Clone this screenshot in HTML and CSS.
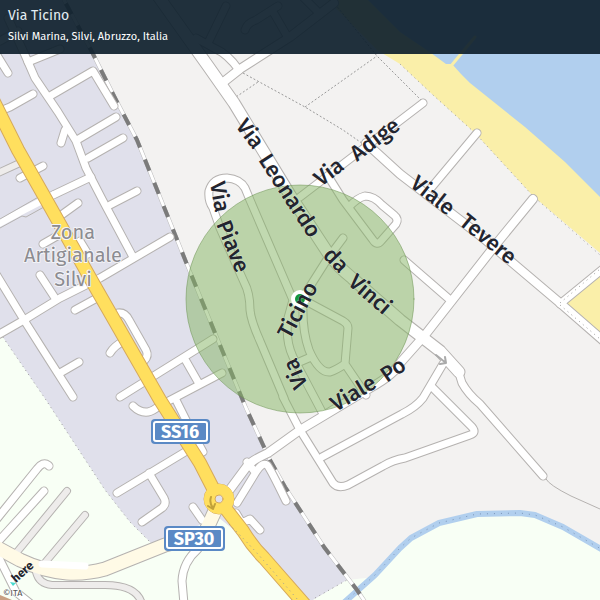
FILE: index.html
```
<!DOCTYPE html>
<html lang="it">
<head>
<meta charset="utf-8">
<meta name="viewport" content="width=device-width, initial-scale=1">
<title>Via Ticino</title>
<link rel="stylesheet" href="styles.css">
</head>
<body>
<main class="map-view">
<svg class="map" viewBox="0 0 600 600" preserveAspectRatio="xMidYMid slice">
  <defs>
    <g id="streets">
      <path d="M8 18L25 55L35 78L58 112L76 141L86 168L102 199L133 257"/>
      <path d="M28 62L60 49M0 41L18 31M50 96L93 71L114 106M77 140L116 117M88 158L123 138M65 130L61 143M0 111L10 107L33 94M-5 52L8 73"/>
      <path d="M20 178L43 166M53 195L91 177M110 205L137 191M60 216L78 203M43 244L64 232M80 241L88 254"/>
      <path d="M-4 336L24 320L60 298L100 278L170 237M40 275L55 298M75 310L97 298M-4 274L24 320L43 350L73 397M60 373L79 362"/>
      <path d="M118 313Q125 312 129 320L146 350Q149 356 144 361M110 353Q114 346 124 341"/>
      <path d="M120 397L213 339M186 361L198 382M133 406Q140 413 148 412Q153 411 159 406L222 373M176 400L190 428L203 452"/>
      <path d="M117 493L185 452M149 473L164 498Q167 504 162 508L142 522M193 507L202 520"/>
      <path d="M237 503L256 472Q262 462 267 465Q270 468 286 501M247 462L255 472M236 513L242 523L250 519L260 530"/>
      <path d="M283 397L300 430L333 483Q338 489 348 485L383 466Q393 460 405 458L470 435Q477 433 472 427L432 387"/>
      <path d="M322 457L402 414Q416 407 423 398L443 364"/>
      <path d="M322 412L293 357Q285 340 288 318L293 300L250 200L245 188Q240 179 227 178Q213 178 209 191Q208 201 213 208L220 228L244 282Q250 293 250 310Q251 321 260 341L284 398"/>
      <path d="M303 303Q302 330 309 350Q319 373 330 372Q336 370 345 364L348 328Q348 324 343 321L302 299L328 258L343 238M297 363L311 357M345 364L366 395"/>
      <path d="M328 176L343 200L373 240Q377 246 381 241L396 224Q399 219 394 215L382 205Q374 196 365 196Q357 198 349 207"/>
      <path d="M300 197L423 103M431 188L477 133M404 260L449 299M560 304L604 268"/>
      <path d="M196 38L214 48Q228 54 239 70M208 43L226 6M272 10L287 36M302 -4L320 14M245 30Q247 23 256 20L278 6"/>
      <path d="M458 370L462 383Q468 394 480 404L543 476"/>
      <path d="M-4 520L37 469Q43 461 48 465L49 466M-4 544L44 491M-4 552L16 592L36 608"/>
      <path d="M198 549Q183 562 182 581L184 604"/>
    </g>
    <g id="avenues">
      <path d="M228 492L248 465Q253 460 268 453L300 430L370 388Q395 374 401 362L425 335L497 243L533 199"/>
      <path d="M221 84L240 69L290 37L334 3"/>
      <path d="M366 143L400 174L482 237L560 303L606 343"/>
    </g>
    <path id="corso" d="M158 -4L208 66L234 103L290 195L328 253Q338 267 352 278L400 320L440 351L459 372"/>
    <g id="lanes">
      <path d="M17 552L67 491M43 565L85 515M36 572Q39 584 52 585L105 585Q137 585 142 604"/>
      <path d="M-4 174L22 162"/>
    </g>
    <path id="provincial" d="M-6 546L20 560Q43 571 67 573Q87 574 105 569L165 545L204 535L219 502"/>
    <path id="highway" d="M-8 98L18 150L48 203L93 283L160 400L200 463L219 500L243 531Q252 546 264 558L306 606"/>
    <path id="railway" d="M64 0L92 52L115 98L137 140L158 192L186 262L222 350L246 408L270 460L285 487L324 547L357 590L368 606"/>
    <path id="river" d="M338 608L375 575L400 548L411 538L439 523L477 514L520 513L535 515L563 527L608 553"/>
  </defs>

  <path class="land" d="M0 0H600V600H0z"/>
  <path class="industrial" d="M0 0H64L92 52L137 142L186 262L246 408L285 489L347 580L313 600H0z"/>
  <path class="meadow" d="M0 333L46 400L105 490L130 522L151 543L219 518L243 537L300 600H0z"/>
  <path class="meadow" d="M313 600L347 580L375 577L411 538L439 523L477 514L520 513L563 527L600 549V600z"/>
  <path class="sand" d="M328 0H420L600 180V253L533 196L475 133L433 95L400 64L377 50zM564 305L600 274V337z"/>
  <path class="water" d="M368 0L400 32L431 53L446 64H452L461 74L470 83L525 127L565 162L600 197V0z"/>
  <path class="pier" d="M451 66L475 37"/>

  <path class="border" d="M0 333L46 400L105 490L130 522L151 543M400 64L433 95L475 133L533 196L600 255M315 598L347 580"/>
  <path class="footway" d="M243 73L305 107L343 130L366 146M305 107L377 56M233 99L258 82M335 4L377 56L423 102"/>
  <path class="track" d="M546 479Q549 485 571 496L600 509"/>
  <use class="stream" href="#river"/>
  <use class="stream-dots" href="#river"/>

  <use class="rail-edge" href="#railway"/>
  <use class="rail-bed" href="#railway"/>
  <use class="rail-ties" href="#railway"/>

  <use class="edge lane-edge" href="#lanes"/>
  <use class="edge street-edge" href="#streets"/>
  <use class="edge avenue-edge" href="#avenues"/>
  <use class="edge corso-edge" href="#corso"/>
  <use class="edge provincial-edge" href="#provincial"/>
  <use class="lane-fill" href="#lanes"/>
  <use class="street-fill" href="#streets"/>
  <use class="avenue-fill" href="#avenues"/>
  <use class="corso-fill" href="#corso"/>
  <use class="provincial-fill" href="#provincial"/>
  <path class="street-fill" d="M42 564L85 566"/>
  <path class="street-fill" d="M0 223L24 210L53 195"/>
  <path class="street-outline" d="M0 228L22 216L26 217L44 207M0 219L42 195"/>
  <path class="corner" d="M0 595L12 600H0z"/>
  <path class="border" d="M560 305L600 339M560 303L600 269"/>

  <use class="highway-edge" href="#highway"/>
  <circle class="roundabout-edge" cx="219" cy="499" r="15"/>
  <use class="highway-fill" href="#highway"/>
  <circle class="roundabout" cx="219" cy="499" r="15"/>
  <circle class="island" cx="219" cy="499" r="4"/>
  <path class="turn" d="M211 497Q209 503 213 508M208 506L213 509L215 504"/>
  <path class="border" d="M229 524Q251 546 264 561L298 600"/>
  <path class="arrow" d="M436 355L446 363M445 357L446 363L440 364"/>

  <circle class="radius" cx="300" cy="299" r="114"/>
  <circle class="pin-ring" cx="300" cy="299" r="9"/>
  <circle class="pin" cx="300" cy="299" r="5"/>

  <g class="area-label">
    <text x="73" y="239">Zona</text>
    <text x="73" y="262">Artigianale</text>
    <text x="73" y="286">Silvi</text>
  </g>
  <g class="road-label">
    <text transform="translate(235 126) rotate(53)">Via</text>
    <text transform="translate(258 160) rotate(57)">Leonardo</text>
    <text transform="translate(322 256) rotate(46)">da</text>
    <text transform="translate(347 284) rotate(41)">Vinci</text>
    <text transform="translate(321 187) rotate(-37)">Via</text>
    <text transform="translate(357 162) rotate(-37)">Adige</text>
    <text transform="translate(409 186) rotate(38)">Viale</text>
    <text transform="translate(458 224) rotate(39)">Tevere</text>
    <text transform="translate(210 183) rotate(80)">Via</text>
    <text transform="translate(216 224) rotate(68)">Piave</text>
    <text transform="translate(308 385) rotate(-113)">Via</text>
    <text transform="translate(290 340) rotate(-62)">Ticino</text>
    <text transform="translate(336 412) rotate(-31)">Viale</text>
    <text transform="translate(387 383) rotate(-35)">Po</text>
  </g>

  <g class="shield">
    <rect class="shield-back" x="151" y="419" width="59" height="25" rx="4"/>
    <rect class="shield-face" x="154" y="422" width="53" height="19" rx="2"/>
    <text x="180" y="438">SS16</text>
    <rect class="shield-back" x="164" y="526" width="61" height="25" rx="4"/>
    <rect class="shield-face" x="167" y="529" width="55" height="19" rx="2"/>
    <text x="194" y="545">SP30</text>
  </g>

  <path class="brand-mark" d="M10 582L16 583L13 586z"/>
  <text class="brand" transform="translate(16 583) rotate(-42)">here</text>
  <text class="copyright" x="3" y="596">©ITA</text>
</svg>
<header class="place">
  <h1 class="place-name">Via Ticino</h1>
  <p class="place-region">Silvi Marina, Silvi, Abruzzo, Italia</p>
</header>
</main>
</body>
</html>
```
FILE: styles.css
```
body {
  margin: 0;
  font-family: "Fira Sans", "Noto Sans", sans-serif;
}

.map-view {
  display: grid;
  height: 100vh;
  overflow: hidden;
}

.map,
.place {
  grid-area: 1 / 1;
}

.map {
  display: block;
  width: 100%;
  height: 100%;
  min-height: 0;
  fill: none;
  stroke-linecap: round;
  stroke-linejoin: round;
}

.place {
  z-index: 1;
  align-self: start;
  padding: 6px 8px;
  background: rgba(14, 31, 44, 0.92);
  color: #e4edf3;
}

.place-name,
.place-region {
  margin: 0;
  font-weight: 400;
}

.place-name {
  font-size: 14px;
  line-height: 20px;
}

.place-region {
  font-size: 11px;
  line-height: 22px;
  color: #fff;
}

/* Ground */
.land { fill: #f3f2f1; }
.industrial { fill: #e0e0eb; }
.meadow { fill: #f8fff5; }
.sand { fill: #faefa9; }
.water { fill: #b1cfee; }
.pier { stroke: #faefa9; stroke-width: 3; }
.stream { stroke: #b1cfee; stroke-width: 6; }
.stream-dots { stroke: #7a94b8; stroke-width: 1; stroke-dasharray: 1 6; stroke-linecap: butt; }
.border { stroke: #999; stroke-width: 1; stroke-dasharray: 1 4; stroke-linecap: butt; }
.footway { stroke: #999; stroke-width: 1; stroke-dasharray: 2 2; stroke-linecap: butt; }
.track { stroke: #b5b2b0; stroke-width: 1; }

/* Railway */
.rail-edge { stroke: #bbb; stroke-width: 4; }
.rail-bed { stroke: #fff; stroke-width: 3; }
.rail-ties { stroke: #7b7b7b; stroke-width: 4; stroke-dasharray: 12 13; stroke-dashoffset: -4; stroke-linecap: butt; }

/* Roads */
.edge { stroke: #b5b2b0; }
.lane-edge { stroke-width: 8; }
.lane-fill { stroke: #eeeceb; stroke-width: 6; }
.street-edge { stroke-width: 9; }
.street-fill { stroke: #fff; stroke-width: 7; }
.street-outline { stroke: #b5b2b0; stroke-width: 1; }
.avenue-edge { stroke-width: 10; }
.avenue-fill { stroke: #fff; stroke-width: 8; }
.corso-edge { stroke-width: 13; }
.corso-fill { stroke: #fff; stroke-width: 11; }
.provincial-edge { stroke-width: 15; }
.provincial-fill { stroke: #fffae6; stroke-width: 13; }
.highway-edge { stroke: #d6a95c; stroke-width: 14; }
.highway-fill { stroke: #ffdf5e; stroke-width: 12; }
.roundabout-edge { stroke: #d6a95c; stroke-width: 1; }
.roundabout { fill: #ffdf5e; }
.island { fill: #e0e0eb; stroke: #d6a95c; stroke-width: 1; }
.turn { stroke: #c2a23a; stroke-width: 2; }
.arrow { stroke: #aaa; stroke-width: 2; }
.corner { fill: #c9a083; }

/* Search radius and pin */
.radius { fill: rgba(132, 180, 97, 0.5); stroke: rgba(105, 145, 80, 0.5); stroke-width: 1; }
.pin-ring { fill: #fff; }
.pin { fill: #14963c; }

/* Labels */
.area-label {
  fill: #8c8c91;
  stroke: #f3f3f7;
  stroke-width: 2;
  paint-order: stroke;
  font-size: 20px;
  text-anchor: middle;
}

.road-label {
  fill: #23252f;
  stroke: rgba(255, 255, 255, 0.4);
  stroke-width: 1;
  paint-order: stroke;
  font-size: 22px;
  font-weight: 500;
}

.shield text {
  fill: #fff;
  font-size: 18px;
  font-weight: 700;
  text-anchor: middle;
}

.shield-back { fill: #5a89c5; }
.shield-face { fill: #5a89c5; stroke: #fff; stroke-width: 2; }
.brand { fill: #23252f; font-size: 12px; font-weight: 700; }
.brand-mark { fill: #48dad0; }
.copyright { fill: #555; stroke: #fff; stroke-width: 1; paint-order: stroke; font-size: 9px; }
```
